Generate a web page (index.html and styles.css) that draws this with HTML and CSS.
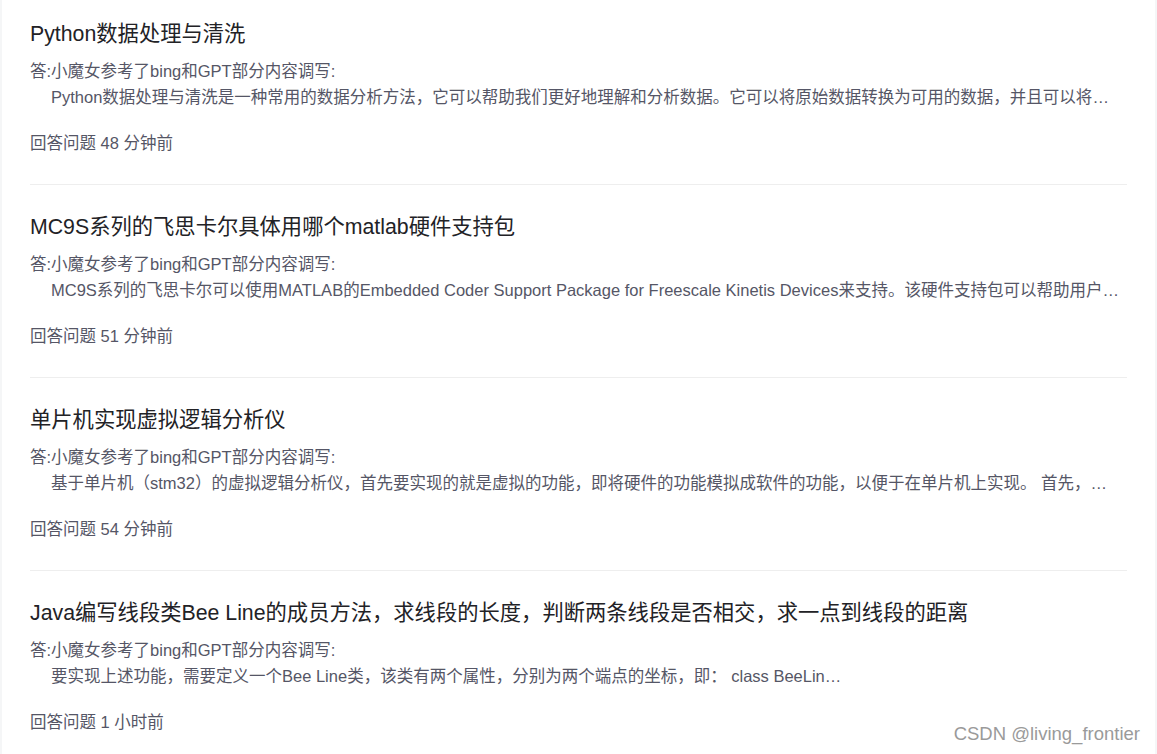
FILE: index.html
```html
<!DOCTYPE html>
<html lang="zh-CN">
<head>
    <meta charset="UTF-8">
    <meta name="viewport" content="width=device-width, initial-scale=1.0">
    <title>回答列表</title>
    <link rel="stylesheet" href="styles.css">
</head>
<body>
    <div class="page">
        <div class="answer-list">
            <div class="answer-item">
                <div class="answer-title">Python数据处理与清洗</div>
                <div class="answer-desc">
                    <div>答:小魔女参考了bing和GPT部分内容调写:</div>
                    <div class="answer-text">Python数据处理与清洗是一种常用的数据分析方法，它可以帮助我们更好地理解和分析数据。它可以将原始数据转换为可用的数据，并且可以将原始数据中的错误和缺失值进行处理，以便更好地进行分析。</div>
                </div>
                <div class="answer-meta">回答问题 48 分钟前</div>
            </div>

            <div class="answer-item">
                <div class="answer-title">MC9S系列的飞思卡尔具体用哪个matlab硬件支持包</div>
                <div class="answer-desc">
                    <div>答:小魔女参考了bing和GPT部分内容调写:</div>
                    <div class="answer-text">MC9S系列的飞思卡尔可以使用MATLAB的Embedded Coder Support Package for Freescale Kinetis Devices来支持。该硬件支持包可以帮助用户在飞思卡尔设备上生成代码。</div>
                </div>
                <div class="answer-meta">回答问题 51 分钟前</div>
            </div>

            <div class="answer-item">
                <div class="answer-title">单片机实现虚拟逻辑分析仪</div>
                <div class="answer-desc">
                    <div>答:小魔女参考了bing和GPT部分内容调写:</div>
                    <div class="answer-text">基于单片机（stm32）的虚拟逻辑分析仪，首先要实现的就是虚拟的功能，即将硬件的功能模拟成软件的功能，以便于在单片机上实现。 首先，需要确定采样频率和通道数量。</div>
                </div>
                <div class="answer-meta">回答问题 54 分钟前</div>
            </div>

            <div class="answer-item">
                <div class="answer-title">Java编写线段类Bee Line的成员方法，求线段的长度，判断两条线段是否相交，求一点到线段的距离</div>
                <div class="answer-desc">
                    <div>答:小魔女参考了bing和GPT部分内容调写:</div>
                    <div class="answer-text">要实现上述功能，需要定义一个Bee Line类，该类有两个属性，分别为两个端点的坐标，即： class BeeLin…</div>
                </div>
                <div class="answer-meta">回答问题 1 小时前</div>
            </div>
        </div>
    </div>
    <div class="watermark">CSDN @living_frontier</div>
</body>
</html>
```

FILE: styles.css
```css
body {
    margin: 0;
    background: #f5f6f7;
    font-family: "Liberation Sans", "Noto Sans CJK SC", sans-serif;
    overflow: hidden;
}
.page {
    margin: 0 2px;
    background: #fff;
    height: 100vh;
    padding: 0 28px;
}
.answer-item {
    padding: 28px 0 29px;
    border-bottom: 1px solid #eeeeee;
}
.answer-item:first-child {
    padding-top: 20px;
}
.answer-title {
    font-size: 21.3px;
    line-height: 28px;
    color: #222226;
}
.answer-desc {
    margin-top: 10px;
    font-size: 16.5px;
    line-height: 26px;
    color: #555666;
}
.answer-text {
    padding-left: 21px;
    padding-right: 4px;
    white-space: nowrap;
    overflow: hidden;
    text-overflow: ellipsis;
}
.answer-meta {
    margin-top: 21px;
    font-size: 16.5px;
    line-height: 24px;
    color: #555666;
}
.watermark {
    position: absolute;
    right: 17px;
    bottom: 9px;
    font-size: 18.5px;
    color: #9a9a9a;
    text-shadow: 0 0 1px #fff;
}
```
